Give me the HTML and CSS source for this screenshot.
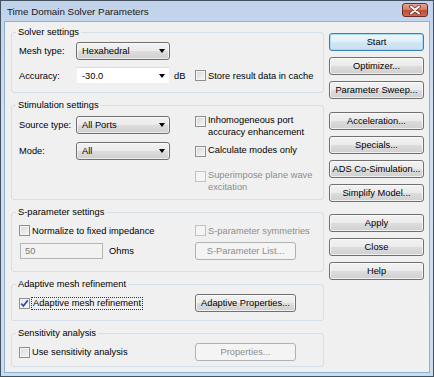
FILE: index.html
```html
<!DOCTYPE html>
<html lang="en">
<head>
    <meta charset="UTF-8">
    <title>Time Domain Solver Parameters</title>
    <link rel="stylesheet" href="styles.css">
</head>
<body>
    <div class="window">
        <div class="titlebar">
            <span class="title">Time Domain Solver Parameters</span>
            <span class="close-btn">
                <svg width="12" height="10" viewBox="0 0 12 10">
                    <path d="M2 1.5 L10 8.5 M10 1.5 L2 8.5" stroke="#6b2a24" stroke-width="3.6" stroke-linecap="round"/>
                    <path d="M2 1.5 L10 8.5 M10 1.5 L2 8.5" stroke="#ffffff" stroke-width="2" stroke-linecap="round"/>
                </svg>
            </span>
        </div>

        <div class="client">
            <div class="groups">
                <!-- solver -->
                <fieldset class="group solver">
                    <legend>Solver settings</legend>
                    <div class="row">
                        <span class="lbl">Mesh type:</span>
                        <span class="dropdown">Hexahedral<i class="arrow"></i></span>
                    </div>
                    <div class="row row-acc">
                        <div class="left">
                            <span class="lbl">Accuracy:</span>
                            <span class="combo">-30.0<i class="arrow"></i></span>
                            <span class="unit">dB</span>
                        </div>
                        <label class="check"><span class="box"></span>Store result data in cache</label>
                    </div>
                </fieldset>

                <!-- stimulation -->
                <fieldset class="group stim">
                    <legend>Stimulation settings</legend>
                    <div class="cols">
                        <div class="left">
                            <div class="row">
                                <span class="lbl">Source type:</span>
                                <span class="dropdown">All Ports<i class="arrow"></i></span>
                            </div>
                            <div class="row row-mode">
                                <span class="lbl">Mode:</span>
                                <span class="dropdown">All<i class="arrow"></i></span>
                            </div>
                        </div>
                        <div class="right">
                            <label class="check multi"><span class="box"></span><span>Inhomogeneous port<br>accuracy enhancement</span></label>
                            <label class="check multi calc"><span class="box"></span><span>Calculate modes only</span></label>
                            <label class="check multi disabled super"><span class="box"></span><span>Superimpose plane wave<br>excitation</span></label>
                        </div>
                    </div>
                </fieldset>

                <!-- s-parameter -->
                <fieldset class="group sparam">
                    <legend>S-parameter settings</legend>
                    <div class="row">
                        <div class="left">
                            <label class="check"><span class="box"></span>Normalize to fixed impedance</label>
                        </div>
                        <label class="check disabled"><span class="box"></span>S-parameter symmetries</label>
                    </div>
                    <div class="row row-ohm">
                        <div class="left">
                            <span class="field">50</span>
                            <span class="unit">Ohms</span>
                        </div>
                        <button class="btn wide" disabled>S-Parameter List...</button>
                    </div>
                </fieldset>

                <!-- adaptive -->
                <fieldset class="group adaptive">
                    <legend>Adaptive mesh refinement</legend>
                    <div class="row">
                        <div class="left">
                            <label class="check"><span class="box checked">
                                <svg width="9" height="9" viewBox="0 0 9 9"><path d="M1.2 4.6 L3.4 7 L7.8 1.4" fill="none" stroke="#2a4f9e" stroke-width="1.7"/></svg>
                            </span><span class="focus">Adaptive mesh refinement</span></label>
                        </div>
                        <button class="btn wide">Adaptive Properties...</button>
                    </div>
                </fieldset>

                <!-- sensitivity -->
                <fieldset class="group sens">
                    <legend>Sensitivity analysis</legend>
                    <div class="row">
                        <div class="left">
                            <label class="check"><span class="box"></span>Use sensitivity analysis</label>
                        </div>
                        <button class="btn wide" disabled>Properties...</button>
                    </div>
                </fieldset>
            </div>

            <div class="actions">
                <div class="btn-set">
                    <button class="btn default">Start</button>
                    <button class="btn">Optimizer...</button>
                    <button class="btn">Parameter Sweep...</button>
                </div>
                <div class="btn-set">
                    <button class="btn">Acceleration...</button>
                    <button class="btn">Specials...</button>
                    <button class="btn">ADS Co-Simulation...</button>
                    <button class="btn">Simplify Model...</button>
                </div>
                <div class="btn-set last">
                    <button class="btn">Apply</button>
                    <button class="btn">Close</button>
                    <button class="btn">Help</button>
                </div>
            </div>
        </div>
    </div>
</body>
</html>
```

FILE: styles.css
```css
body {
    margin: 0;
    font-family: "Liberation Sans", Arial, sans-serif;
    font-size: 9.3px;
    color: #000;
}

.window {
    width: 434px;
    height: 377px;
    box-sizing: border-box;
    border: 1px solid #44525f;
    background: linear-gradient(#c0d3eb, #d0e0f3 30%, #cbdcf0);
    display: flex;
    flex-direction: column;
}

.titlebar {
    height: 20px;
    display: flex;
    align-items: center;
    justify-content: space-between;
    padding: 0 5px 0 6px;
}

.title {
    font-size: 9.8px;
    color: #1a1a1a;
}

.close-btn {
    width: 26px;
    height: 14px;
    margin-top: -2px;
    box-sizing: border-box;
    border: 1px solid #6a2e2a;
    border-radius: 3px;
    background: linear-gradient(#e8a596, #d67d6c 45%, #c14b36 55%, #cf6a50);
    display: flex;
    align-items: center;
    justify-content: center;
}

.client {
    flex: 1;
    margin: 0 3px 3px 3px;
    border: 1px solid #8fb0cf;
    background: #f0f0f0;
    display: flex;
}

/* left side: group boxes */
.groups {
    width: 313px;
    padding: 4px 0 0 6px;
    display: flex;
    flex-direction: column;
    gap: 6px;
}

.group {
    box-sizing: border-box;
    margin: 0;
    min-width: 0;
    padding: 0 6px 0 7px;
    border: 1px solid #d5dfe5;
    border-radius: 3px;
}

.group legend {
    padding: 0 2px;
    margin-left: -3px;
    line-height: 12px;
}

.solver { height: 67px; padding-top: 4px; }
.stim { height: 101px; padding-top: 4px; }
.sparam { height: 66px; padding-top: 7px; }
.adaptive { height: 43px; padding-top: 4px; }
.sens { height: 40px; padding-top: 4px; }

.row {
    display: flex;
    align-items: center;
}

.left {
    width: 176px;
    flex: none;
    display: flex;
    align-items: center;
}

.lbl {
    width: 57px;
    flex: none;
}

.row-acc { margin-top: 7px; }
.row-mode { margin-top: 8px; }
.row-ohm { margin-top: 6px; }

.cols {
    display: flex;
}

.cols .left {
    display: block;
    padding-top: 1px;
}

.dropdown {
    width: 94px;
    height: 18px;
    box-sizing: border-box;
    padding: 0 4px 0 5px;
    border: 1px solid #707070;
    border-radius: 3px;
    background: linear-gradient(#f2f2f2, #ebebeb 50%, #dddddd 50%, #cfcfcf);
    box-shadow: inset 0 0 0 1px rgba(255, 255, 255, 0.6);
    display: flex;
    align-items: center;
    justify-content: space-between;
}

.combo {
    width: 94px;
    height: 17px;
    box-sizing: border-box;
    padding: 0 4px 0 5px;
    border: 1px solid;
    border-color: #d8dde3 #eef1f4 #eef1f4 #eef1f4;
    background: #fff;
    display: flex;
    align-items: center;
    justify-content: space-between;
}

.arrow {
    width: 0;
    height: 0;
    border-left: 3.5px solid transparent;
    border-right: 3.5px solid transparent;
    border-top: 4px solid #000;
}

.unit {
    margin-left: 4px;
}

.check {
    display: flex;
    align-items: center;
    white-space: nowrap;
}

.box {
    width: 11px;
    height: 11px;
    box-sizing: border-box;
    flex: none;
    margin-right: 2px;
    border: 1px solid #8e8f8f;
    background: linear-gradient(135deg, #d8d8d8, #f6f6f6);
    box-shadow: inset 0 0 0 1px #f4f4f4;
    display: flex;
    align-items: center;
    justify-content: center;
}

.box.checked {
    background: linear-gradient(135deg, #dfe6f0, #fafbfd);
}

.check.disabled {
    color: #8d8d8d;
}

.check.disabled .box {
    border-color: #c2c2c2;
    background: #f4f4f4;
    box-shadow: none;
}

.check.multi {
    align-items: flex-start;
    line-height: 11.5px;
}

.check.multi .box {
    margin-top: 1px;
}

.right .calc { margin-top: 7px; }
.right .super { margin-top: 13px; }

.focus {
    outline: 1px dotted #333;
    outline-offset: 0;
    padding: 0 1px;
    line-height: 11px;
}

.field {
    width: 83px;
    height: 16px;
    box-sizing: border-box;
    margin-left: 1px;
    padding-left: 4px;
    border: 1px solid #b5b5b5;
    background: #f2f2f2;
    color: #7a7a7a;
    display: flex;
    align-items: center;
}

.field + .unit {
    margin-left: 6px;
}

/* buttons */
.btn {
    display: block;
    width: 95px;
    height: 18px;
    box-sizing: border-box;
    padding: 0;
    font-family: inherit;
    font-size: 9.3px;
    color: #000;
    border: 1px solid #707070;
    border-radius: 3px;
    background: linear-gradient(#f2f2f2, #ebebeb 50%, #dddddd 50%, #cfcfcf);
    box-shadow: inset 0 0 0 1px rgba(255, 255, 255, 0.7);
}

.btn.wide {
    width: 101px;
}

.btn.default {
    border-color: #3c7fb1;
    background: linear-gradient(#eef6fb, #e2eff8 50%, #d3e6f3 50%, #c8def0);
    box-shadow: inset 0 0 0 1px #a9dbf6;
}

.btn:disabled {
    color: #8d8d8d;
    border-color: #adb2b5;
    background: #f4f4f4;
    box-shadow: none;
}

.actions {
    width: 95px;
    margin-left: 5px;
    padding-top: 11px;
}

.btn-set {
    display: flex;
    flex-direction: column;
    gap: 6px;
}

.btn-set + .btn-set {
    margin-top: 13px;
}

.btn-set.last {
    margin-top: 12px;
}
```
